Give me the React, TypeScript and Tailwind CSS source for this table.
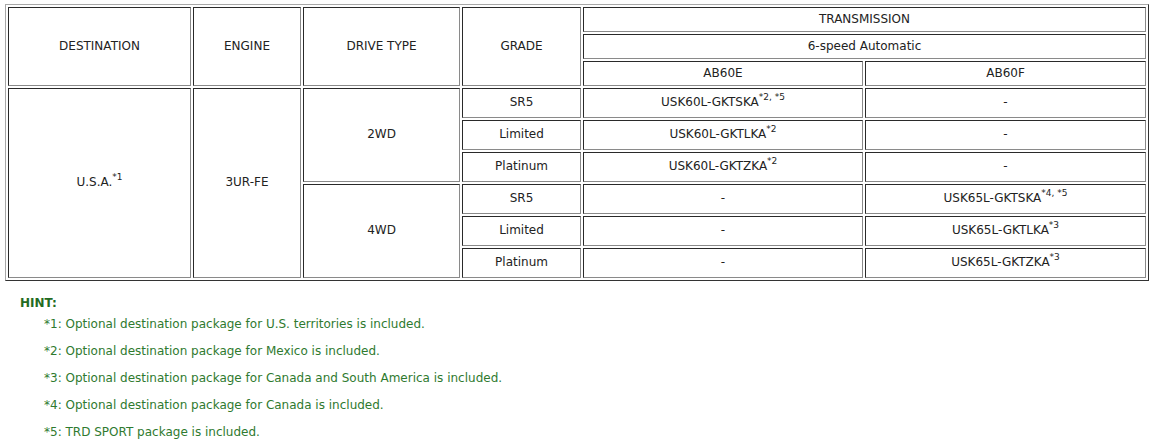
import React from "react";

const cell =
  "border border-t-[#2a2a2a] border-l-[#2a2a2a] border-r-[#8a8a8a] border-b-[#8a8a8a] text-center align-middle font-normal px-0 pt-0 pb-[2px]";

const hints = [
  "*1: Optional destination package for U.S. territories is included.",
  "*2: Optional destination package for Mexico is included.",
  "*3: Optional destination package for Canada and South America is included.",
  "*4: Optional destination package for Canada is included.",
  "*5: TRD SPORT package is included.",
];

function Sup({ children }: { children: React.ReactNode }) {
  return <sup className="text-[9px] -top-[0.7em]">{children}</sup>;
}

export default function App() {
  return (
    <div className="bg-white w-[1158px] h-[447px] pl-[5px] pt-[4px] text-[12px] text-[#222] font-['DejaVu_Sans',Verdana,sans-serif]">
      <table className="table-fixed w-[1144px] border-separate border-spacing-[2px] border border-t-[#a8a8a8] border-l-[#a8a8a8] border-r-[#333] border-b-[#333]">
        <colgroup>
          <col className="w-[183px]" />
          <col className="w-[108px]" />
          <col className="w-[157px]" />
          <col className="w-[119px]" />
          <col className="w-[280px]" />
          <col className="w-[281px]" />
        </colgroup>
        <thead>
          <tr className="h-[25px]">
            <th rowSpan={3} className={cell}>DESTINATION</th>
            <th rowSpan={3} className={cell}>ENGINE</th>
            <th rowSpan={3} className={cell}>DRIVE TYPE</th>
            <th rowSpan={3} className={cell}>GRADE</th>
            <th colSpan={2} className={cell}>TRANSMISSION</th>
          </tr>
          <tr className="h-[25px]">
            <th colSpan={2} className={cell}>6-speed Automatic</th>
          </tr>
          <tr className="h-[25px]">
            <th className={cell}>AB60E</th>
            <th className={cell}>AB60F</th>
          </tr>
        </thead>
        <tbody>
          <tr className="h-[30px]">
            <td rowSpan={6} className={cell}>
              U.S.A.<Sup>*1</Sup>
            </td>
            <td rowSpan={6} className={cell}>3UR-FE</td>
            <td rowSpan={3} className={cell}>2WD</td>
            <td className={cell}>SR5</td>
            <td className={cell}>
              USK60L-GKTSKA<Sup>*2, *5</Sup>
            </td>
            <td className={cell}>-</td>
          </tr>
          <tr className="h-[30px]">
            <td className={cell}>Limited</td>
            <td className={cell}>
              USK60L-GKTLKA<Sup>*2</Sup>
            </td>
            <td className={cell}>-</td>
          </tr>
          <tr className="h-[30px]">
            <td className={cell}>Platinum</td>
            <td className={cell}>
              USK60L-GKTZKA<Sup>*2</Sup>
            </td>
            <td className={cell}>-</td>
          </tr>
          <tr className="h-[30px]">
            <td rowSpan={3} className={cell}>4WD</td>
            <td className={cell}>SR5</td>
            <td className={cell}>-</td>
            <td className={cell}>
              USK65L-GKTSKA<Sup>*4, *5</Sup>
            </td>
          </tr>
          <tr className="h-[30px]">
            <td className={cell}>Limited</td>
            <td className={cell}>-</td>
            <td className={cell}>
              USK65L-GKTLKA<Sup>*3</Sup>
            </td>
          </tr>
          <tr className="h-[30px]">
            <td className={cell}>Platinum</td>
            <td className={cell}>-</td>
            <td className={cell}>
              USK65L-GKTZKA<Sup>*3</Sup>
            </td>
          </tr>
        </tbody>
      </table>

      {/* Hint notes */}
      <div className="mt-[14px] pl-[15px] text-[#2f7a2f]">
        <div className="font-bold leading-[16px] text-[#236b23]">HINT:</div>
        <div className="pl-[24px]">
          {hints.map((h) => (
            <p key={h} className="leading-[27px]">
              {h}
            </p>
          ))}
        </div>
      </div>
    </div>
  );
}
